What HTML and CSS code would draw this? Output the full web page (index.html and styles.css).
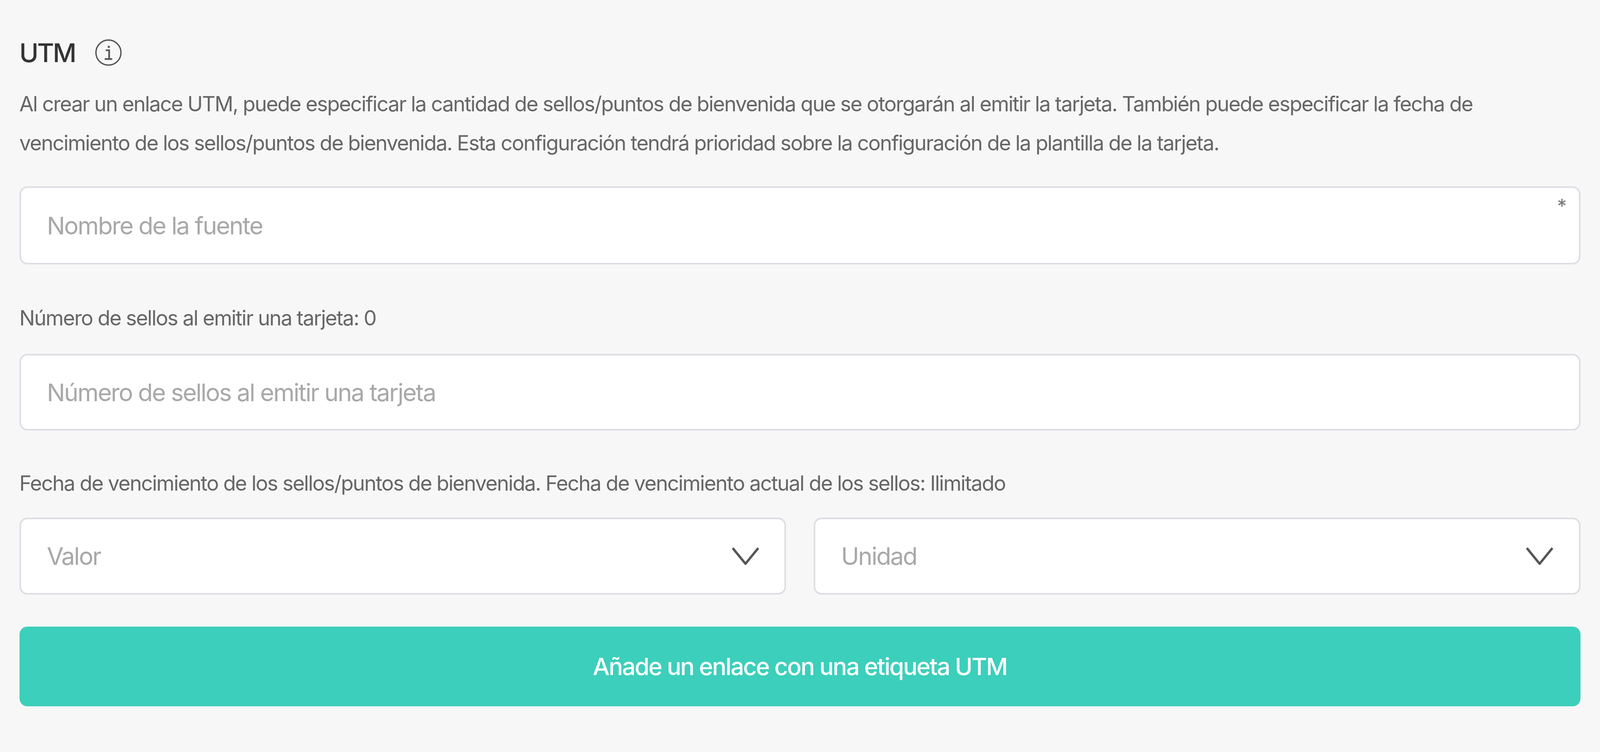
FILE: index.html
```html
<!DOCTYPE html>
<html lang="es">
<head>
    <meta charset="UTF-8">
    <title>UTM</title>
    <link rel="stylesheet" href="styles.css">
</head>
<body>
    <main class="utm-form">
        <div class="heading">
            <h2>UTM</h2>
            <svg class="info-icon" viewBox="0 0 80 80" fill="none" stroke="#555" stroke-width="4">
                <circle cx="40" cy="40" r="37"/>
                <path d="M32 33h10v26M29 59h22" stroke-width="5"/>
                <path d="M38 20h6v6h-6z" fill="#555" stroke="none"/>
            </svg>
        </div>
        <p class="description">Al crear un enlace UTM, puede especificar la cantidad de sellos/puntos de bienvenida que se otorgarán al emitir la tarjeta. También puede especificar la fecha de vencimiento de los sellos/puntos de bienvenida. Esta configuración tendrá prioridad sobre la configuración de la plantilla de la tarjeta.</p>

        <div class="field">
            <input type="text" class="source-input" placeholder="Nombre de la fuente">
            <span class="required-mark">*</span>
        </div>

        <label class="field-label">Número de sellos al emitir una tarjeta: 0</label>
        <div class="field">
            <input type="text" class="stamps-input" placeholder="Número de sellos al emitir una tarjeta">
        </div>

        <label class="field-label field-label-last">Fecha de vencimiento de los sellos/puntos de bienvenida. Fecha de vencimiento actual de los sellos: Ilimitado</label>
        <div class="select-row">
            <div class="select">
                <span>Valor</span>
                <svg class="chevron" viewBox="0 0 84 46" preserveAspectRatio="none" fill="none" stroke="#555" stroke-width="6"><path d="M2 2l40 41L82 2" vector-effect="non-scaling-stroke"/></svg>
            </div>
            <div class="select">
                <span>Unidad</span>
                <svg class="chevron" viewBox="0 0 84 46" preserveAspectRatio="none" fill="none" stroke="#555" stroke-width="6"><path d="M2 2l40 41L82 2" vector-effect="non-scaling-stroke"/></svg>
            </div>
        </div>

        <button class="submit">Añade un enlace con una etiqueta UTM</button>
    </main>
</body>
</html>
```

FILE: styles.css
```css
/* widths follow vw and heights follow vh, so the form keeps its proportions in any window */
body {
    margin: 0;
    background-color: #f7f7f7;
    font-family: Inter, "Liberation Sans", sans-serif;
    color: #666;
}
.utm-form {
    height: 100vh;
    box-sizing: border-box;
    padding: 4.94vh 1.23vw 0 1.21vw;
}
.heading {
    display: flex;
    align-items: center;
    gap: 1.24vw;
    height: 4.16vh;
}
.heading h2 {
    margin: 0;
    font-size: 1.62vw;
    font-weight: 500;
    letter-spacing: -0.05em;
    color: #333;
}
.info-icon {
    width: 3.6vh;
    height: 3.6vh;
}
.description {
    margin: 2.13vh 0 3.17vh;
    font-size: 1.294vw;
    line-height: 5.2vh;
    letter-spacing: -0.0376em;
}
.field {
    position: relative;
}
.field input,
.select {
    box-sizing: border-box;
    width: 100%;
    padding: 0 1.62vw;
    background-color: #fff;
    border: 4px solid #dddde4;
    border-radius: 20px;
    font-family: inherit;
    font-size: 1.514vw;
    letter-spacing: -0.04em;
    color: #a8a8a8;
    outline: none;
}
.source-input {
    height: 10.39vh;
}
.stamps-input {
    height: 10.18vh;
}
.field input::placeholder {
    color: #a8a8a8;
    opacity: 1;
}
.required-mark {
    position: absolute;
    top: 1vh;
    right: 0.85vw;
    font-size: 1.2vw;
    color: #777;
}
.field-label {
    display: block;
    margin: 5.56vh 0 3.22vh;
    font-size: 1.294vw;
    line-height: 3.12vh;
    letter-spacing: -0.0376em;
}
.field-label-last {
    margin: 5.45vh 0 3.01vh;
}
.select-row {
    display: grid;
    grid-template-columns: 1fr 1fr;
    gap: 1.72vw;
}
.select {
    display: flex;
    align-items: center;
    justify-content: space-between;
    height: 10.23vh;
    padding-right: 1.6vw;
}
.chevron {
    width: 1.68vw;
    height: 2.34vh;
}
.submit {
    display: block;
    width: 100%;
    height: 10.6vh;
    margin-top: 4.26vh;
    background-color: #3ccfbb;
    border: none;
    border-radius: 20px;
    font-family: inherit;
    font-size: 1.49vw;
    font-weight: 500;
    letter-spacing: -0.04em;
    color: #fff;
}
```
